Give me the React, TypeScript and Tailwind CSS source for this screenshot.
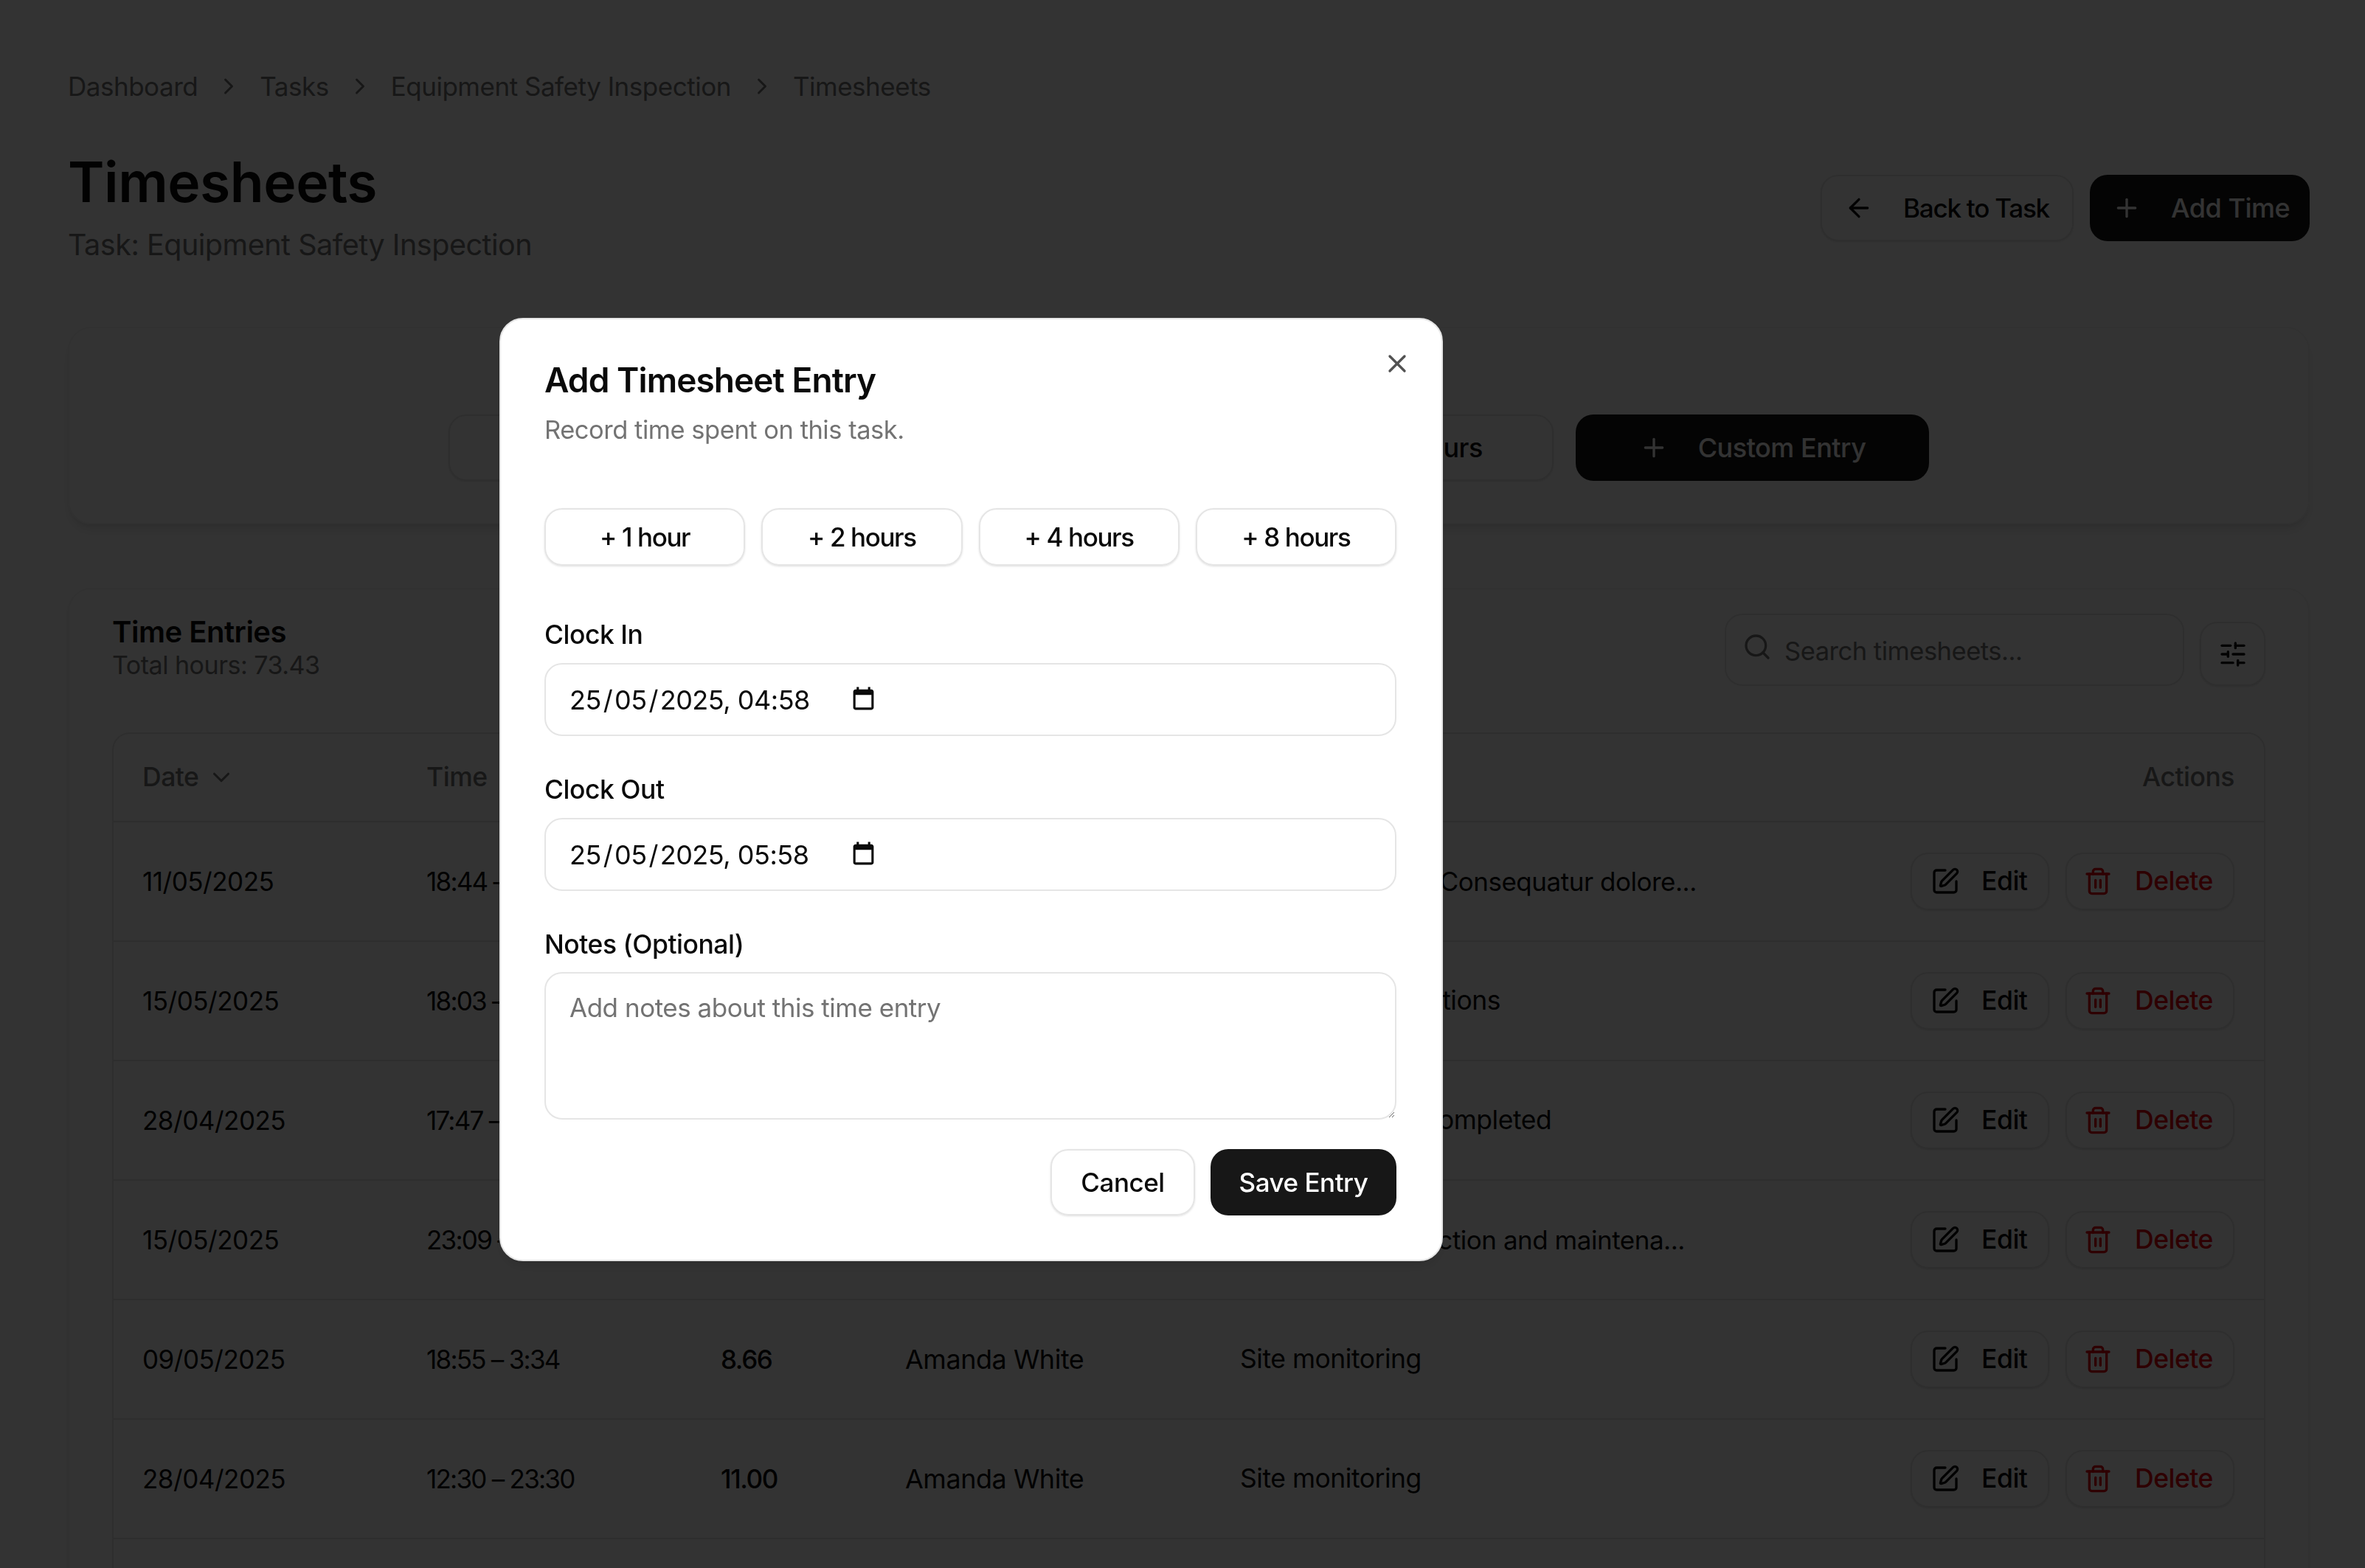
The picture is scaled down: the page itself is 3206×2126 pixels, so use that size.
import React from 'react';
import { ArrowLeft, ChevronDown, ChevronRight, Plus, Search, SlidersHorizontal, SquarePen, Trash2, X } from 'lucide-react';

const entries = [
  { date: '11/05/2025', time: '18:44 – 2:10', hours: '7.43', name: 'Amanda White', notes: 'Quidem eveniet. Consequatur dolore...' },
  { date: '15/05/2025', time: '18:03 – 1:15', hours: '7.20', name: 'Amanda White', notes: 'Equipment inductions' },
  { date: '28/04/2025', time: '17:47 – 2:30', hours: '8.72', name: 'Amanda White', notes: 'Site inspection completed' },
  { date: '15/05/2025', time: '23:09 – 8:30', hours: '9.35', name: 'Amanda White', notes: 'Equipment inspection and maintena...' },
  { date: '09/05/2025', time: '18:55 – 3:34', hours: '8.66', name: 'Amanda White', notes: 'Site monitoring' },
  { date: '28/04/2025', time: '12:30 – 23:30', hours: '11.00', name: 'Amanda White', notes: 'Site monitoring' },
  { date: '09/05/2025', time: '18:55 – 3:34', hours: '8.66', name: 'Amanda White', notes: 'Site monitoring' },
];

const crumbs = ['Dashboard', 'Tasks', 'Equipment Safety Inspection'];
const quickAdds = ['+ 1 hour', '+ 2 hours', '+ 4 hours', '+ 8 hours'];

const CalendarIcon = () => (
  <svg viewBox="0 0 24 24" className="w-[37px] h-[37px]" fill="currentColor">
    <path d="M19 3h-1V1h-2v2H8V1H6v2H5c-1.11 0-1.99.9-1.99 2L3 19c0 1.1.89 2 2 2h14c1.1 0 2-.9 2-2V5c0-1.1-.9-2-2-2zm0 16H5V8h14v11z" />
  </svg>
);

const DateField = ({ value }: { value: string }) => (
  <div className="h-[99px] border-2 border-[#e5e5e5] rounded-[24px] pl-[32px] flex items-center bg-white text-[#0a0a0a]">
    <span className="w-[380px] text-[36px] leading-[44px]">{value}</span>
    <CalendarIcon />
  </div>
);

const App = () => {
  return (
    <div className="relative w-[3206px] h-[2126px] overflow-hidden bg-white font-[Inter,sans-serif] tracking-[-0.03em] text-[#0a0a0a]">
      <div className="pl-[92px] pr-[75px] pt-[95px]">
        {/* Breadcrumbs */}
        <nav className="flex items-center gap-[24px] text-[35px] leading-[44px] text-[#737373]">
          {crumbs.map((crumb) => (
            <React.Fragment key={crumb}>
              <span>{crumb}</span>
              <ChevronRight size={36} />
            </React.Fragment>
          ))}
          <span>Timesheets</span>
        </nav>

        {/* Page header */}
        <div className="flex justify-between items-start mt-[64px]">
          <div>
            <h1 className="text-[75px] leading-[88px] font-semibold">Timesheets</h1>
            <p className="mt-[16px] text-[39.5px] leading-[50px] text-[#737373]">Task: Equipment Safety Inspection</p>
          </div>
          <div className="flex gap-[22px] mt-[34px]">
            <button className="w-[343px] h-[90px] flex items-center gap-[40px] pl-[30px] border-2 border-[#e5e5e5] rounded-[24px] text-[35px] tracking-[-0.035em] font-medium shadow-sm">
              <ArrowLeft size={40} />
              Back to Task
            </button>
            <button className="w-[298px] h-[90px] flex items-center gap-[40px] pl-[30px] rounded-[24px] bg-[#171717] text-white text-[36px] font-medium">
              <Plus size={40} />
              Add Time
            </button>
          </div>
        </div>

        {/* Quick add card */}
        <section className="mt-[86px] h-[268px] border-2 border-[#f5f5f5] rounded-[32px] shadow-lg flex items-end justify-center gap-[30px] pb-[57px]">
          {quickAdds.map((label) => (
            <button key={label} className="w-[352px] h-[90px] border-2 border-[#e5e5e5] rounded-[24px] text-[36px] font-medium shadow-sm">
              {label}
            </button>
          ))}
          <button className="w-[479px] h-[90px] flex items-center justify-center gap-[40px] rounded-[24px] bg-[#171717] text-white text-[36px] font-medium">
            <Plus size={40} />
            Custom Entry
          </button>
        </section>

        {/* Time entries card */}
        <section className="mt-[86px] border-2 border-[#f5f5f5] rounded-[32px] shadow-md px-[58px] pt-[33px]">
          <div className="flex justify-between items-start">
            <div className="pt-[2px]">
              <h2 className="text-[40px] leading-[46px] font-semibold">Time Entries</h2>
              <p className="text-[34px] leading-[44px] text-[#737373]">Total hours: 73.43</p>
            </div>
            <div className="flex items-end gap-[21px]">
              <div className="relative">
                <Search size={40} className="absolute left-[24px] top-[25px] text-[#737373]" />
                <input
                  placeholder="Search timesheets..."
                  className="w-[623px] h-[98px] border-2 border-[#e5e5e5] rounded-[24px] pl-[79px] pt-[3px] text-[34.5px] placeholder:text-[#737373]"
                />
              </div>
              <button className="w-[89px] h-[87px] flex items-center justify-center border-2 border-[#e5e5e5] rounded-[24px] shadow-sm">
                <SlidersHorizontal size={40} />
              </button>
            </div>
          </div>

          <div className="mt-[63px] border-2 border-[#e5e5e5] rounded-[24px]">
            <div className="h-[120px] pl-[39px] pr-[40px] grid grid-cols-[385px_399px_250px_454px_1fr_auto] items-center border-b-2 border-[#e5e5e5] text-[35.5px] font-medium text-[#737373]">
              <div className="flex items-center gap-[12px]">
                Date
                <ChevronDown size={38} />
              </div>
              <div>Time</div>
              <div>Hours</div>
              <div>Employee</div>
              <div>Notes</div>
              <div>Actions</div>
            </div>
            {entries.map((entry, i) => (
              <div key={i} className="h-[162px] pl-[39px] pr-[40px] grid grid-cols-[385px_399px_250px_454px_1fr_auto] items-center border-b-2 border-[#e5e5e5] text-[35px]">
                <div>{entry.date}</div>
                <div className="tracking-[-0.05em]">{entry.time}</div>
                <div className="font-medium tracking-[-0.04em]">{entry.hours}</div>
                <div className="text-[36px]">{entry.name}</div>
                <div className={entry.notes.endsWith('...') ? 'text-[35px]' : 'text-[35.5px]'}>{entry.notes}</div>
                <div className="flex gap-[22px] text-[35.5px]">
                  <button className="w-[188px] h-[78px] flex items-center gap-[29px] pl-[25px] border-2 border-[#e5e5e5] rounded-[24px] font-medium shadow-sm">
                    <SquarePen size={40} />
                    Edit
                  </button>
                  <button className="w-[229px] h-[78px] flex items-center gap-[30px] pl-[22px] border-2 border-[#e5e5e5] rounded-[24px] font-medium text-[#e7000b] shadow-sm">
                    <Trash2 size={40} />
                    Delete
                  </button>
                </div>
              </div>
            ))}
          </div>
        </section>
      </div>

      {/* Dialog */}
      <div className="fixed inset-0 bg-black/80">
        <div className="absolute left-[677px] top-[431px] w-[1279px] h-[1279px] bg-white border-2 border-[#e5e5e5] rounded-[32px] shadow-lg pt-[52px] pl-[59px] pr-[61px]">
          <button className="absolute right-[40px] top-[40px] text-[#525252]">
            <X size={40} />
          </button>
          <h2 className="text-[46px] leading-[60px] font-semibold tracking-[-0.02em]">Add Timesheet Entry</h2>
          <p className="mt-[16px] text-[34.5px] leading-[44px] text-[#737373]">Record time spent on this task.</p>

          <div className="mt-[84px] grid grid-cols-4 gap-[22px]">
            {quickAdds.map((label) => (
              <button key={label} className="h-[78px] border-2 border-[#e5e5e5] rounded-[24px] text-[35px] tracking-[-0.04em] font-medium shadow-sm">
                {label}
              </button>
            ))}
          </div>

          <label className="block mt-[72px] mb-[16px] text-[35.5px] leading-[44px] font-medium">Clock In</label>
          <DateField value={'25\u200a/\u200a05\u200a/\u200a2025, 04:58'} />

          <label className="block mt-[51px] mb-[16px] text-[35.5px] leading-[44px] font-medium">Clock Out</label>
          <DateField value={'25\u200a/\u200a05\u200a/\u200a2025, 05:58'} />

          <label className="block mt-[51px] mb-[15px] text-[35.5px] leading-[44px] font-medium">Notes (Optional)</label>
          <textarea
            placeholder="Add notes about this time entry"
            className="block w-full h-[200px] border-2 border-[#e5e5e5] rounded-[24px] px-[32px] py-[24px] text-[35px] leading-[44px] placeholder:text-[#737373]"
          />

          <div className="mt-[40px] flex justify-end gap-[21px]">
            <button className="w-[196px] h-[90px] border-2 border-[#e5e5e5] rounded-[24px] text-[35px] font-medium shadow-sm">Cancel</button>
            <button className="w-[252px] h-[90px] rounded-[24px] bg-[#171717] text-white text-[35px] font-medium">Save Entry</button>
          </div>
        </div>
      </div>
    </div>
  );
};

export default App;
